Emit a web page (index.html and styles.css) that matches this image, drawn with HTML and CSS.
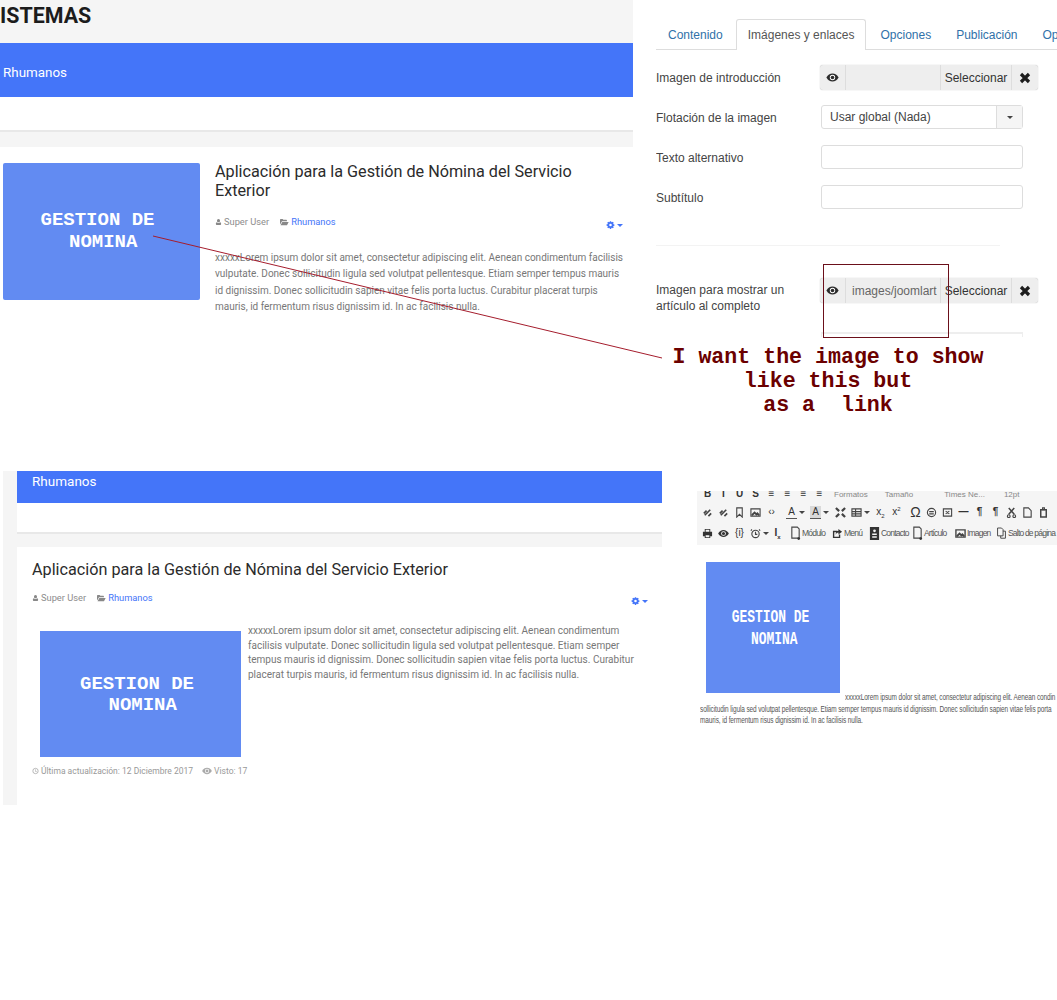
FILE: index.html
```html
<!DOCTYPE html>
<html lang="es">

<head>
    <meta charset="UTF-8">
    <title>Imagen como enlace</title>
    <link rel="stylesheet" href="styles.css">
</head>

<body>
    <svg class="defs" width="0" height="0">
        <symbol id="i-user" viewBox="0 0 12 12"><path d="M6 1a2.600 2.600 0 0 1 2.600 2.800A2.600 2.600 0 0 1 6 6.600a2.600 2.600 0 0 1-2.600-2.800A2.600 2.600 0 0 1 6 1zM3 6.600c.8.700 1.800 1 3 1s2.200-.3 3-1c1 .3 1.500 1.400 1.500 3 0 1-.6 1.400-1.400 1.400H2.900c-.8 0-1.400-.4-1.400-1.400 0-1.600.5-2.700 1.500-3z"/></symbol>
        <symbol id="i-folder" viewBox="0 0 14 12"><path d="M1 2.500C1 2 1.400 1.500 2 1.500h3l1 1.200h4.500c.5 0 .9.400.9.900V5H4L1.400 9.500 1 9zM4.500 6H14l-2.500 5H1.800z"/></symbol>
        <symbol id="i-cog" viewBox="-1 0 14 12"><path fill-rule="evenodd" d="M5 .0h2l.3 1.500 1 .4 1.300-.8 1.400 1.400-.8 1.300.4 1 1.500.3v2l-1.500.3-.4 1 .8 1.300-1.400 1.400-1.300-.8-1 .4-.3 1.500H5l-.3-1.500-1-.4-1.300.8L1 10l.8-1.300-.4-1L-.1 7V5l1.500-.3.4-1L1 2.400 2.400 1l1.300.8 1-.4zM6 4a2 2 0 1 0 0 4 2 2 0 0 0 0-4z"/></symbol>
        <symbol id="i-eye" viewBox="0 0 14 10"><path d="M7 .6c2.800 0 5.200 1.700 6.800 4.400C12.200 7.700 9.800 9.400 7 9.400S1.800 7.700.2 5C1.800 2.300 4.200.6 7 .6z"/><circle cx="7" cy="5" r="3" fill="#fff"/><circle cx="7" cy="5" r="2"/></symbol>
        <symbol id="i-clock" viewBox="0 0 12 12"><circle cx="6" cy="6" r="4.600" fill="none" stroke="currentColor" stroke-width="1.400"/><path d="M5.500 3h1v3.300H8.500v1h-3z"/></symbol>
        <symbol id="i-times" viewBox="0 0 12 12"><path d="M2 2l8 8M10 2l-8 8" fill="none" stroke="#1d1d1d" stroke-width="3.200"/></symbol>
    </svg>

    <!-- arriba izquierda: la vista con la imagen de introduccion -->
    <section class="shot shot-intro">
        <div class="site-head">ISTEMAS</div>
        <div class="cat-bar">Rhumanos</div>
        <div class="blank-band"></div>
        <div class="grey-band"></div>
        <div class="intro-article">
            <div class="cover cover-intro">GESTION DE<br>&nbsp;NOMINA</div>
            <div class="intro-body">
                <h2 class="art-title">Aplicación para la Gestión de Nómina del Servicio Exterior</h2>
                <div class="meta-row">
                    <span class="meta"><svg class="ico"><use href="#i-user"/></svg>Super User</span>
                    <span class="meta"><svg class="ico ico-wide"><use href="#i-folder"/></svg><a href="#">Rhumanos</a></span>
                    <span class="tools"><svg class="ico"><use href="#i-cog"/></svg><i class="caret"></i></span>
                </div>
                <p class="art-text">xxxxxLorem ipsum dolor sit amet, consectetur adipiscing elit. Aenean condimentum facilisis vulputate. Donec sollicitudin ligula sed volutpat pellentesque. Etiam semper tempus mauris id dignissim. Donec sollicitudin sapien vitae felis porta luctus. Curabitur placerat turpis mauris, id fermentum risus dignissim id. In ac facilisis nulla.</p>
            </div>
        </div>
    </section>

    <!-- arriba derecha: formulario de joomla -->
    <section class="shot shot-form">
        <ul class="tabs">
            <li><a href="#">Contenido</a></li>
            <li class="active"><a href="#">Imágenes y enlaces</a></li>
            <li><a href="#">Opciones</a></li>
            <li><a href="#">Publicación</a></li>
            <li class="last"><a href="#">Op</a></li>
        </ul>
        <div class="form-row">
            <label>Imagen de introducción</label>
            <div class="media-group">
                <span class="add-eye"><svg class="ico-eye"><use href="#i-eye"/></svg></span>
                <span class="media-path"></span>
                <span class="media-btn">Seleccionar</span>
                <span class="media-x"><svg class="ico-x"><use href="#i-times"/></svg></span>
            </div>
        </div>
        <div class="form-row">
            <label>Flotación de la imagen</label>
            <div class="select-box"><span class="select-val">Usar global (Nada)</span><span class="select-arrow"><i class="caret dark"></i></span></div>
        </div>
        <div class="form-row">
            <label>Texto alternativo</label>
            <div class="text-box"></div>
        </div>
        <div class="form-row">
            <label>Subtítulo</label>
            <div class="text-box"></div>
        </div>
        <hr class="form-sep">
        <div class="form-row tall">
            <label>Imagen para mostrar un artículo al completo</label>
            <div class="media-group">
                <span class="add-eye"><svg class="ico-eye"><use href="#i-eye"/></svg></span>
                <span class="media-path">images/joomlart</span>
                <span class="media-btn">Seleccionar</span>
                <span class="media-x"><svg class="ico-x"><use href="#i-times"/></svg></span>
            </div>
        </div>
        <div class="cut-box"></div>
    </section>

    <!-- abajo izquierda: el articulo completo -->
    <section class="shot shot-full">
        <div class="full-inner">
            <div class="cat-bar cat-bar-full">Rhumanos</div>
            <div class="blank-band short"></div>
            <div class="grey-band short"></div>
            <div class="full-article">
                <h2 class="art-title">Aplicación para la Gestión de Nómina del Servicio Exterior</h2>
                <div class="meta-row">
                    <span class="meta"><svg class="ico"><use href="#i-user"/></svg>Super User</span>
                    <span class="meta"><svg class="ico ico-wide"><use href="#i-folder"/></svg><a href="#">Rhumanos</a></span>
                    <span class="tools"><svg class="ico"><use href="#i-cog"/></svg><i class="caret"></i></span>
                </div>
                <div class="full-body">
                    <div class="cover cover-full">GESTION DE<br>&nbsp;NOMINA</div>
                    <p class="art-text">xxxxxLorem ipsum dolor sit amet, consectetur adipiscing elit. Aenean condimentum facilisis vulputate. Donec sollicitudin ligula sed volutpat pellentesque. Etiam semper tempus mauris id dignissim. Donec sollicitudin sapien vitae felis porta luctus. Curabitur placerat turpis mauris, id fermentum risus dignissim id. In ac facilisis nulla.</p>
                </div>
                <div class="meta-row foot">
                    <span class="meta"><svg class="ico"><use href="#i-clock"/></svg>Última actualización: 12 Diciembre 2017</span>
                    <span class="meta"><svg class="ico ico-wide"><use href="#i-eye"/></svg>Visto: 17</span>
                </div>
            </div>
        </div>
    </section>

    <!-- abajo derecha: el editor -->
    <section class="shot shot-editor">
        <div class="toolbar">
            <div class="tb-row tb-cut">
                <span class="tb-g">B</span><span class="tb-g">I</span><span class="tb-g">U</span><span class="tb-g">S</span>
                <span class="tb-g">≡</span><span class="tb-g">≡</span><span class="tb-g">≡</span><span class="tb-g">≡</span>
                <span class="tb-lab lab-format">Formatos</span><span class="tb-lab lab-size">Tamaño</span><span class="tb-lab lab-font">Times Ne...</span><span class="tb-lab lab-pt">12pt</span>
            </div>
            <div class="tb-row tb-two">
                <svg class="tb-ico" viewBox="0 0 12 12"><path d="M3 9l6-6M2 7l3-3M7 10l3-3" stroke-width="1.800"/></svg>
                <svg class="tb-ico" viewBox="0 0 12 12"><path d="M3 9l6-6M2 7l3-3M7 10l3-3" stroke-width="1.800"/></svg>
                <svg class="tb-ico" viewBox="0 0 12 12"><path d="M3 1h6v10L6 8l-3 3z"/></svg>
                <svg class="tb-ico" viewBox="0 0 12 12"><path d="M1 2h10v8H1z"/><path d="M2 9l3-3 2 2 1-1 2 2" stroke-width="2"/></svg>
                <span class="tb-g thin">‹›</span>
                <span class="tb-g under after-code">A</span><i class="caret dark tb-caret"></i>
                <span class="tb-g under shade">A</span><i class="caret dark tb-caret"></i>
                <svg class="tb-ico nudge" viewBox="0 0 12 12"><path d="M1 1l3.500 3.500M11 1L7.500 4.500M1 11l3.500-3.500M11 11L7.500 7.500" stroke-width="2.400"/></svg>
                <svg class="tb-ico" viewBox="0 0 12 12"><path d="M1 2h10v8H1zM1 5h10M1 7.500h10M5 2v8"/></svg><i class="caret dark tb-caret"></i>
                <span class="tb-g thin">x<sub>2</sub></span>
                <span class="tb-g thin">x<sup>2</sup></span>
                <span class="tb-g big">Ω</span>
                <svg class="tb-ico" viewBox="0 0 12 12"><circle cx="6" cy="6" r="4.500"/><path d="M3.500 5h5M3.500 7.500h5"/></svg>
                <svg class="tb-ico" viewBox="0 0 12 12"><path d="M1.500 2h9v8h-9zM4 4.500l4 3M8 4.500l-4 3"/></svg>
                <span class="tb-g">—</span>
                <span class="tb-g">¶</span>
                <span class="tb-g">¶</span>
                <svg class="tb-ico" viewBox="0 0 12 12"><path d="M3 1l6 7M9 1L3 8" stroke-width="1.600"/><circle cx="3" cy="10" r="1.500"/><circle cx="9" cy="10" r="1.500"/></svg>
                <svg class="tb-ico" viewBox="0 0 12 12"><path d="M2 1h5l3 3v7H2z"/></svg>
                <svg class="tb-ico" viewBox="0 0 12 12"><path d="M3 3h6v8H3z" stroke-width="1.600"/><path d="M5 1h2v2H5z"/></svg>
            </div>
            <div class="tb-row tb-three">
                <svg class="tb-ico fill" viewBox="0 0 12 12"><path d="M3 1h6v3h2v5H9v2H3V9H1V4h2zM4 2v2h4V2zM4 8v2h4V8z"/></svg>
                <svg class="tb-ico fill" viewBox="0 0 14 10"><use href="#i-eye"/></svg>
                <span class="tb-g thin">{i}</span>
                <svg class="tb-ico" viewBox="0 0 12 12"><circle cx="6" cy="6.500" r="4"/><path d="M6 4v3h2M2 1.500L1 3M10 1.500L11 3"/></svg><i class="caret dark tb-caret"></i>
                <span class="tb-g clear">I<sub>x</sub></span>
                <span class="tb-btn b-mod"><svg class="tb-ico lg" viewBox="0 0 12 16"><path d="M2 1h6l2 2v10H2z"/><circle cx="9.500" cy="13.500" r="1.500" stroke="none" fill="#333"/></svg>Módulo</span>
                <span class="tb-btn b-menu"><svg class="tb-ico fill" viewBox="0 0 12 12"><path d="M1 3h5v1.500H2.500v5h5V7H9v4H1zM7 1l4 3-4 3V5C5.500 5 4.500 6 4 7.500 4 5 5 3.500 7 3z"/></svg>Menú</span>
                <span class="tb-btn b-cont"><svg class="tb-ico fill lg" viewBox="0 0 12 16"><path fill-rule="evenodd" d="M1 1h10v14H1zM6 3.500a1.500 1.500 0 1 0 0 3 1.500 1.500 0 0 0 0-3zM3.500 8h5v1.500h-5zM3.500 11h5v1.500h-5z"/></svg>Contacto</span>
                <span class="tb-btn b-art"><svg class="tb-ico lg" viewBox="0 0 12 16"><path d="M2 1h6l2 2v10H2z"/><circle cx="9.500" cy="13.500" r="1.500" stroke="none" fill="#333"/></svg>Artículo</span>
                <span class="tb-btn b-img"><svg class="tb-ico" viewBox="0 0 12 12"><path d="M1 2h10v8H1z" stroke-width="1.500"/><path d="M2 9l3-3 2 2 1-1 2 2" stroke-width="2"/></svg>Imagen</span>
                <span class="tb-btn b-page"><svg class="tb-ico lg" viewBox="0 0 14 16"><path d="M2 1h5l2 2v8H2zM9 5h3v9H6v-3"/></svg>Salto de página</span>
            </div>
        </div>
        <div class="cover cover-editor"><span>GESTION DE<br>&nbsp;NOMINA</span></div>
        <div class="editor-text first-line">xxxxxLorem ipsum dolor sit amet, consectetur adipiscing elit. Aenean condin</div>
        <div class="editor-text">sollicitudin ligula sed volutpat pellentesque. Etiam semper tempus mauris id dignissim. Donec sollicitudin sapien vitae felis porta</div>
        <div class="editor-text">mauris, id fermentum risus dignissim id. In ac facilisis nulla.</div>
    </section>

    <!-- anotacion encima de todo -->
    <svg class="arrow" width="1057" height="1000"><path d="M153 236L662 358" stroke="#a51d2d" fill="none"/></svg>
    <div class="mark-box"></div>
    <p class="note">I want the image to show
like this but
as a  link</p>
</body>

</html>
```

FILE: styles.css
```css
* {
    box-sizing: border-box;
}

html,
body {
    margin: 0;
    background: #fff;
}

body {
    position: relative;
    width: 1057px;
    height: 1000px;
    overflow: hidden;
    font-family: Roboto, "Liberation Sans", sans-serif;
}

.defs {
    position: absolute;
}

/* the four pasted screenshots sit freely on the canvas */
.shot {
    position: absolute;
    overflow: hidden;
}

.shot-intro {
    left: 0;
    top: 0;
    width: 633px;
    height: 330px;
}

.shot-form {
    left: 656px;
    top: 19px;
    width: 401px;
    height: 318px;
    font-family: "Liberation Sans", Arial, sans-serif;
    font-size: 12px;
    color: #444;
}

.shot-full {
    left: 3px;
    top: 471px;
    width: 659px;
    height: 334px;
    background: #f5f5f5;
}

.shot-editor {
    left: 697px;
    top: 491px;
    width: 360px;
    height: 240px;
}

.site-head {
    height: 43px;
    padding-top: 4px;
    background: #f5f5f5;
    font-size: 21.400px;
    font-weight: 700;
    line-height: 24px;
    color: #1c1c1c;
}

.cat-bar {
    height: 54px;
    padding: 0 3px;
    background: #4475f9;
    color: #fff;
    font-size: 13.400px;
    line-height: 60px;
}

.blank-band {
    height: 33px;
    background: #fff;
}

.grey-band {
    height: 17px;
    background: #f5f5f5;
    border-top: 2px solid #e8e8e8;
}

.blank-band.short {
    height: 29px;
}

.grey-band.short {
    height: 15px;
}

.intro-article {
    display: flex;
    gap: 15px;
    padding: 16px 8px 0 3px;
}

.cover {
    flex: none;
    background: #628bf2;
    color: #fff;
    font-family: "Liberation Mono", monospace;
    font-weight: 700;
    font-size: 19px;
    line-height: 22px;
    text-align: center;
}

.cover-intro {
    width: 197px;
    height: 137px;
    padding: 46px 8px 0 0;
    border-radius: 2px;
}

.intro-body {
    flex: 1;
    min-width: 0;
    margin-top: -1px;
}

.art-title {
    margin: 0;
    font-size: 16.200px;
    font-weight: 400;
    line-height: 19px;
    color: #2b2b2b;
}

.meta-row {
    display: flex;
    align-items: center;
    gap: 10px;
    position: relative;
    margin-top: 15px;
    height: 12px;
    font-size: 9.300px;
    color: #8d8d8d;
}

.meta a {
    color: #4475f9;
    text-decoration: none;
}

.ico {
    width: 7px;
    height: 8px;
    margin-right: 2px;
    vertical-align: -1px;
    fill: #888;
    color: #888;
}

.ico-wide {
    width: 10px;
}

.tools {
    margin-left: auto;
    margin-right: 2px;
    margin-top: 6px;
}

.tools .ico {
    fill: #4475f9;
    width: 9px;
}

.caret {
    display: inline-block;
    width: 0;
    height: 0;
    vertical-align: middle;
    border-top: 3px solid #4475f9;
    border-left: 3px solid transparent;
    border-right: 3px solid transparent;
}

.caret.dark {
    border-top-color: #444;
}

.art-text {
    margin: 23px 0 0;
    font-size: 10px;
    line-height: 16.400px;
    color: #777;
}

/* form */
.tabs {
    display: flex;
    height: 31px;
    margin: 0;
    padding: 0;
    list-style: none;
    border-bottom: 1px solid #ddd;
    white-space: nowrap;
}

.tabs li {
    flex: none;
    margin-right: 1px;
    height: 31px;
}

.tabs a {
    display: block;
    padding: 0 12px;
    line-height: 32px;
    color: #3071a9;
    text-decoration: none;
}

.tabs .active {
    margin-right: 2px;
    background: #fff;
    border: 1px solid #ddd;
    border-bottom: 0;
    border-radius: 3px 3px 0 0;
}

.tabs .active a {
    padding: 0 11px;
    line-height: 30px;
    color: #555;
}

.tabs .last {
    margin-right: 0;
}

.tabs .last a {
    padding-right: 0;
}

.form-row {
    display: grid;
    grid-template-columns: 165px 218px;
    height: 25px;
    margin-top: 15px;
}

.form-row label {
    align-self: center;
    line-height: 16px;
}

.media-group {
    display: flex;
    width: 218px;
    height: 25px;
    margin-left: -1px;
    background: #eee;
    border-radius: 3px;
    box-shadow: 0 0 1px #aaa;
    line-height: 26px;
}

.add-eye {
    display: flex;
    align-items: center;
    justify-content: center;
    width: 26px;
    border-right: 1px solid #ddd;
}

.ico-eye {
    width: 13px;
    height: 9px;
    fill: #2b2b2b;
}

.media-path {
    width: 95px;
    padding-left: 6px;
    white-space: nowrap;
    overflow: hidden;
    border-right: 1px solid #ddd;
    color: #666;
}

.media-btn {
    width: 71px;
    text-align: center;
    color: #333;
    border-right: 1px solid #ddd;
}

.media-x {
    display: flex;
    flex: 1;
    align-items: center;
    justify-content: center;
}

.ico-x {
    width: 12px;
    height: 12px;
}

.select-box {
    display: flex;
    width: 202px;
    height: 24px;
    background: #fff;
    border: 1px solid #ddd;
    border-radius: 3px;
    line-height: 23px;
}

.select-val {
    flex: 1;
    padding-left: 8px;
}

.select-arrow {
    display: flex;
    align-items: center;
    justify-content: center;
    width: 26px;
    background: #f5f5f5;
    border-left: 1px solid #ddd;
}

.text-box {
    width: 202px;
    height: 24px;
    background: #fff;
    border: 1px solid #ddd;
    border-radius: 3px;
}

.form-sep {
    width: 344px;
    margin: 35px 0 32px;
    border: 0;
    border-top: 1px solid #f3f3f3;
}

.form-row.tall {
    height: 25px;
    margin-top: 0;
}

.form-row.tall label {
    align-self: start;
    padding-top: 4px;
}

.cut-box {
    width: 202px;
    height: 6px;
    margin: 29px 0 0 165px;
    background: #fff;
    border-top: 2px solid #eee;
    border-left: 1px solid #eee;
    border-right: 1px solid #eee;
}

/* full article */
.full-inner {
    margin-left: 14px;
    background: #fff;
    min-height: 334px;
}

.cat-bar-full {
    height: 32px;
    padding: 0 15px;
    font-size: 13.500px;
    line-height: 21px;
}

.full-article {
    padding: 13px 12px 0 15px;
}

.full-article .art-title {
    line-height: 20px;
}

.full-article .meta-row {
    margin-top: 11px;
}

.full-body {
    display: flex;
    gap: 7px;
    margin-top: 21px;
}

.cover-full {
    width: 201px;
    height: 126px;
    margin: 7px 0 0 8px;
    padding: 43px 7px 0 0;
    line-height: 21px;
}

.full-body .art-text {
    width: 388px;
    margin: 0;
    line-height: 14.500px;
}

.full-article .foot {
    margin-top: 8px;
    gap: 9px;
    font-size: 8.500px;
    color: #999;
}

.foot .ico {
    fill: #aaa;
    color: #aaa;
}

/* editor */
.toolbar {
    height: 54px;
    background: #f5f5f5;
    overflow: hidden;
    color: #333;
    font-family: "Liberation Sans", Arial, sans-serif;
}

.tb-row {
    display: flex;
    align-items: center;
    gap: 5px;
    height: 20px;
    padding-left: 5px;
    white-space: nowrap;
}

.tb-cut {
    height: 8px;
    align-items: flex-end;
    overflow: hidden;
}

.tb-cut .tb-g {
    position: relative;
    top: 1px;
}

.tb-two {
    margin-top: 3px;
}

.tb-three {
    margin-top: 1px;
}

.tb-g {
    flex: none;
    width: 11px;
    font-size: 10px;
    font-weight: 700;
    line-height: 12px;
    text-align: center;
}

.tb-g.thin {
    font-weight: 400;
}

.tb-g.big {
    margin-left: 3px;
    font-size: 14px;
    font-weight: 400;
}

.tb-g.under {
    border-bottom: 1px solid #555;
    font-weight: 400;
}

.tb-g.after-code {
    margin-left: 4px;
}

.tb-g.shade {
    background: #d9d9d9;
}

.tb-g.clear {
    margin-left: -2px;
}

.tb-g sub,
.tb-g sup {
    font-size: 6px;
    line-height: 0;
}

.tb-lab {
    flex: none;
    font-size: 8px;
    color: #888;
}

.lab-format {
    margin-left: 4px;
}

.lab-size {
    margin-left: 12px;
}

.lab-font {
    margin-left: 26px;
}

.lab-pt {
    margin-left: 14px;
}

.tb-ico {
    flex: none;
    width: 11px;
    height: 11px;
    fill: none;
    stroke: #444;
    stroke-width: 1.200;
}

.tb-ico.lg {
    height: 15px;
}

.tb-ico.fill {
    fill: #333;
    stroke: none;
}

.tb-ico.nudge {
    margin-left: 1px;
}

.tb-caret {
    flex: none;
    margin-left: -3px;
}

.tb-btn {
    display: flex;
    flex: none;
    align-items: center;
    gap: 1px;
    margin-right: -5px;
    font-size: 8.500px;
    letter-spacing: -0.8px;
    color: #555;
}

.b-mod {
    width: 42px;
    margin-left: 2px;
}

.b-menu {
    width: 37px;
}

.b-cont {
    width: 43px;
}

.b-art {
    width: 43px;
}

.b-img {
    width: 41px;
}

.b-page {
    width: 61px;
}

.cover-editor {
    width: 134px;
    height: 131px;
    margin: 17px 0 0 9px;
    padding: 44px 5px 0 0;
    line-height: 22px;
}

.cover-editor span {
    display: block;
    transform: scaleX(0.68);
}

/* the pasted editor shot is squeezed sideways, so the text is too */
.editor-text {
    width: 520px;
    height: 11.500px;
    margin-left: 3px;
    white-space: nowrap;
    font-family: "Liberation Sans", Arial, sans-serif;
    font-size: 9.500px;
    line-height: 11px;
    letter-spacing: -0.15px;
    color: #555;
    transform: scaleX(0.68);
    transform-origin: 0 0;
}

.editor-text.first-line {
    margin-top: -2px;
    margin-left: 148px;
}

/* annotation */
.arrow {
    position: absolute;
    left: 0;
    top: 0;
    pointer-events: none;
}

.mark-box {
    position: absolute;
    left: 823px;
    top: 264px;
    width: 126px;
    height: 74px;
    border: 1px solid #6b0f1a;
}

.note {
    position: absolute;
    left: 648px;
    top: 345px;
    width: 360px;
    margin: 0;
    font-family: "Liberation Mono", monospace;
    font-size: 21.600px;
    font-weight: 700;
    line-height: 24px;
    color: #6b0000;
    text-align: center;
    white-space: pre;
}
```
